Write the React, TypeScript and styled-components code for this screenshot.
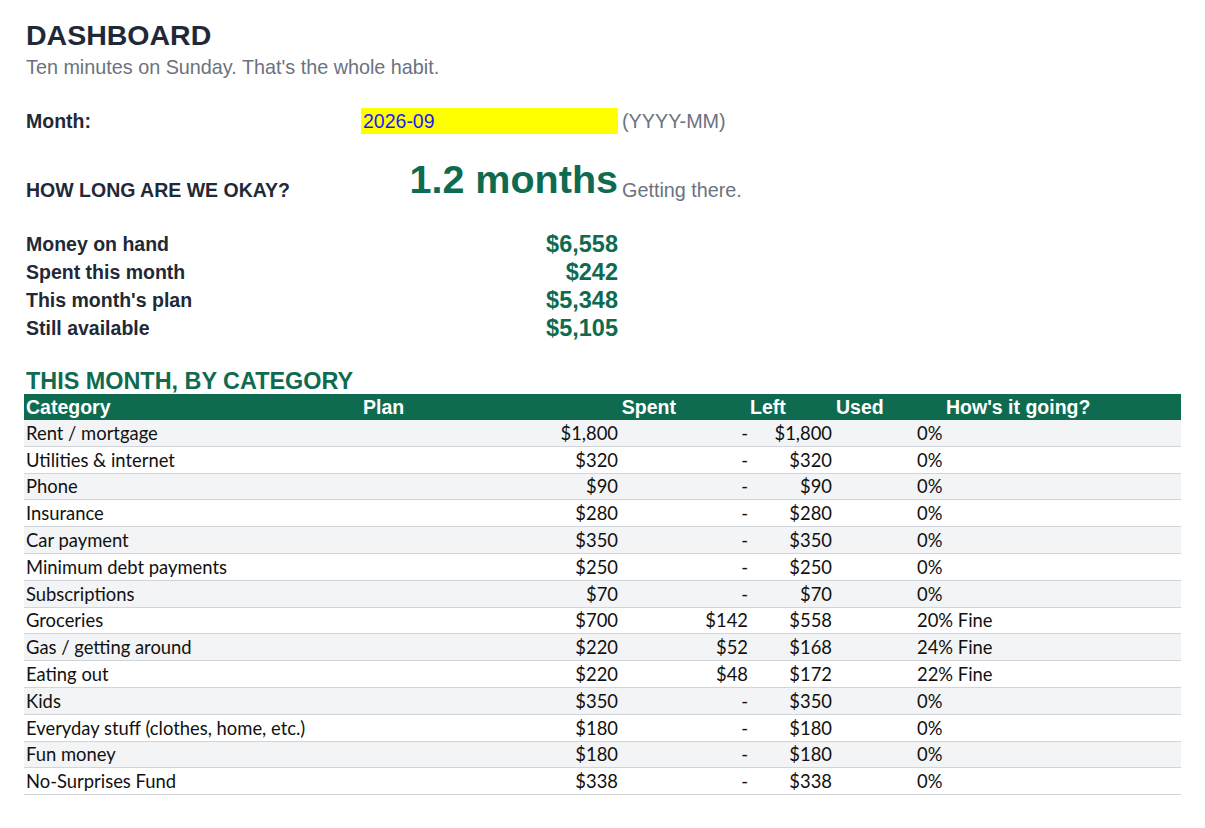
import styled, { createGlobalStyle } from "styled-components";

const Global = createGlobalStyle`
  body { margin: 0; background: #fff; font-family: "Liberation Sans", Arial, sans-serif; }
`;

const Page = styled.div`
  padding: 18px 24px 0 26px;
  color: #1f2937;
`;

const Title = styled.h1`
  margin: 0;
  font-size: 28.5px;
  font-weight: 700;
  line-height: 34px;
`;

const Sub = styled.div`
  font-size: 19.8px;
  color: #6b7280;
  line-height: 24px;
  margin-top: 3px;
`;

const Line = styled.div<{ $h: number; $mt?: number }>`
  display: grid;
  grid-template-columns: 335px 257px 1fr;
  align-items: center;
  height: ${(p) => p.$h}px;
  margin-top: ${(p) => p.$mt ?? 0}px;
`;

const Label = styled.div`
  font-size: 19.5px;
  font-weight: 700;
`;

const Yellow = styled.div`
  background: #ffff00;
  color: #1a1aff;
  font-size: 19.5px;
  height: 26px;
  line-height: 26px;
  padding-left: 2px;
`;

const Hint = styled.div<{ $align?: string }>`
  font-size: 19.8px;
  color: #6b7280;
  padding-left: 4px;
  align-self: ${(p) => p.$align ?? "center"};
`;

const Big = styled.div`
  font-size: 39.5px;
  font-weight: 700;
  color: #0f6b4f;
  text-align: right;
`;

const Value = styled.div`
  font-size: 23.5px;
  font-weight: 700;
  color: #0f6b4f;
  text-align: right;
`;

const Section = styled.h2`
  margin: 26px 0 0;
  font-size: 23.4px;
  font-weight: 700;
  color: #0f6b4f;
  line-height: 26px;
`;

const cols = "337px 257px 130px 86px 80px 1fr";

const Head = styled.div`
  display: grid;
  grid-template-columns: ${cols};
  background: #0f6b4f;
  color: #fff;
  font-size: 19.5px;
  font-weight: 700;
  height: 26px;
  align-items: center;
  margin-left: -2px;
  padding-left: 2px;
  width: 1155px;
`;

const Row = styled.div<{ $alt: boolean }>`
  display: grid;
  grid-template-columns: ${cols};
  background: ${(p) => (p.$alt ? "#f3f4f6" : "#fff")};
  border-bottom: 1px solid #d1d5db;
  height: 25.8px;
  align-items: center;
  font-family: Lato, "Liberation Sans", sans-serif;
  font-size: 18.4px;
  color: #111;
  margin-left: -2px;
  padding-left: 2px;
  width: 1155px;
`;

const Cell = styled.div<{ $r?: boolean; $pad?: number }>`
  text-align: ${(p) => (p.$r ? "right" : "left")};
  padding-right: ${(p) => (p.$r ? p.$pad ?? 2 : 0)}px;
  padding-left: ${(p) => (!p.$r ? p.$pad ?? 0 : 0)}px;
  white-space: nowrap;
`;

const rows: [string, string, string, string, string][] = [
  ["Rent / mortgage", "$1,800", "-", "$1,800", "0%"],
  ["Utilities & internet", "$320", "-", "$320", "0%"],
  ["Phone", "$90", "-", "$90", "0%"],
  ["Insurance", "$280", "-", "$280", "0%"],
  ["Car payment", "$350", "-", "$350", "0%"],
  ["Minimum debt payments", "$250", "-", "$250", "0%"],
  ["Subscriptions", "$70", "-", "$70", "0%"],
  ["Groceries", "$700", "$142", "$558", "20% Fine"],
  ["Gas / getting around", "$220", "$52", "$168", "24% Fine"],
  ["Eating out", "$220", "$48", "$172", "22% Fine"],
  ["Kids", "$350", "-", "$350", "0%"],
  ["Everyday stuff (clothes, home, etc.)", "$180", "-", "$180", "0%"],
  ["Fun money", "$180", "-", "$180", "0%"],
  ["No-Surprises Fund", "$338", "-", "$338", "0%"],
];

const summary = [
  ["Money on hand", "$6,558"],
  ["Spent this month", "$242"],
  ["This month's plan", "$5,348"],
  ["Still available", "$5,105"],
];

export default function App() {
  return (
    <Page>
      <Global />
      <Title>DASHBOARD</Title>
      <Sub>Ten minutes on Sunday. That's the whole habit.</Sub>
      <Line $h={26} $mt={29}>
        <Label>Month:</Label>
        <Yellow>2026-09</Yellow>
        <Hint>(YYYY-MM)</Hint>
      </Line>
      <Line $h={50} $mt={20}>
        <Label style={{ alignSelf: "end", paddingBottom: 2 }}>HOW LONG ARE WE OKAY?</Label>
        <Big>1.2 months</Big>
        <Hint $align="end" style={{ paddingBottom: 2 }}>Getting there.</Hint>
      </Line>
      <div style={{ marginTop: 26 }}>
        {summary.map(([l, v]) => (
          <Line key={l} $h={28}>
            <Label>{l}</Label>
            <Value>{v}</Value>
          </Line>
        ))}
      </div>
      <Section>THIS MONTH, BY CATEGORY</Section>
      <Head>
        <Cell>Category</Cell>
        <Cell>Plan</Cell>
        <Cell $r $pad={74}>Spent</Cell>
        <Cell>Left</Cell>
        <Cell>Used</Cell>
        <Cell $pad={30}>How's it going?</Cell>
      </Head>
      {rows.map((r, i) => (
        <Row key={r[0]} $alt={i % 2 === 0}>
          <Cell>{r[0]}</Cell>
          <Cell $r>{r[1]}</Cell>
          <Cell $r>{r[2]}</Cell>
          <Cell $r $pad={4}>{r[3]}</Cell>
          <Cell $pad={81} style={{ gridColumn: "5 / 7" }}>{r[4]}</Cell>
        </Row>
      ))}
    </Page>
  );
}
